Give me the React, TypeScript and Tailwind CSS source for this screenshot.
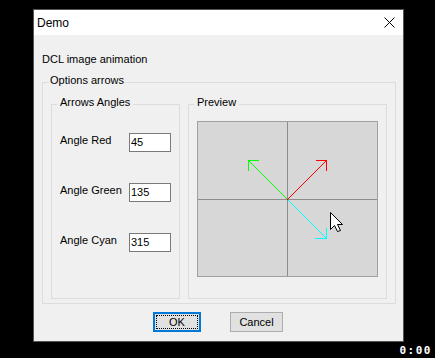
import React from "react";

const font = { fontFamily: '"Liberation Sans", Arial, sans-serif' };

function GroupBox({
  title,
  className,
  legendClass,
  children,
}: {
  title: string;
  className: string;
  legendClass: string;
  children?: React.ReactNode;
}) {
  return (
    <div className={`relative border border-[#dcdcdc] ${className}`}>
      <span
        className={`absolute top-[-9px] bg-[#f0f0f0] text-[11px] leading-[13px] text-black whitespace-nowrap ${legendClass}`}
      >
        {title}
      </span>
      {children}
    </div>
  );
}

function AngleRow({ label, value }: { label: string; value: string }) {
  return (
    <div className="flex items-start h-[19px]">
      <span className="w-[69px] text-[11px] leading-[15px] text-black">{label}</span>
      <input
        readOnly
        value={value}
        className="w-[42px] h-[19px] border border-[#7a7a7a] bg-white pl-[1px] pb-[2px] text-[11px] text-black outline-none"
        style={font}
      />
    </div>
  );
}

// pixel-stepped 45° arrow, drawn like the GDI original
function Arrow({
  color,
  dx,
  dy,
  len,
  headX,
  headY,
}: {
  color: string;
  dx: number;
  dy: number;
  len: number;
  headX: [number, number];
  headY: [number, number];
}) {
  const tx = 90 + dx * len;
  const ty = 78 + dy * len;
  return (
    <g fill={color} shapeRendering="crispEdges">
      {Array.from({ length: len + 1 }, (_, i) => (
        <rect key={i} x={90 + dx * i} y={78 + dy * i} width={1} height={1} />
      ))}
      <rect x={headX[0]} y={ty} width={headX[1] - headX[0] + 1} height={1} />
      <rect x={tx} y={headY[0]} width={1} height={headY[1] - headY[0] + 1} />
    </g>
  );
}

function PreviewCanvas() {
  return (
    <svg width={181} height={156} className="block ml-[8px] mt-[16px]">
      <rect x={0.5} y={0.5} width={180} height={155} fill="#d7d7d7" stroke="#a0a0a0" />
      <line x1={90.5} y1={1} x2={90.5} y2={155} stroke="#8c8c8c" />
      <line x1={1} y1={78.5} x2={180} y2={78.5} stroke="#8c8c8c" />
      <Arrow color="#00ffff" dx={1} dy={1} len={39} headX={[118, 129]} headY={[107, 117]} />
      <Arrow color="#00ff00" dx={-1} dy={-1} len={39} headX={[51, 61]} headY={[39, 49]} />
      <Arrow color="#ff0000" dx={1} dy={-1} len={39} headX={[119, 129]} headY={[39, 49]} />
      <polygon
        points="133.5,91.5 133.5,108.5 137.5,104.5 140.5,110.5 143.5,109.5 140.5,103.5 145.5,103.5"
        fill="#ffffff"
        stroke="#000000"
        strokeWidth={1}
        strokeLinejoin="miter"
      />
    </svg>
  );
}

export default function App() {
  return (
    <div className="w-[435px] h-[358px] bg-black pl-[33px] pt-[9px] overflow-hidden" style={font}>
      <div className="w-[371px] h-[333px] border border-[#555555] flex flex-col">
        {/* title bar */}
        <div className="h-[25px] bg-white flex items-center justify-between pl-[3px] pr-[8px]">
          <span className="text-[12px] text-black">Demo</span>
          <svg width={11} height={11} className="block">
            <line x1={0.5} y1={0.5} x2={10.5} y2={10.5} stroke="#000" />
            <line x1={10.5} y1={0.5} x2={0.5} y2={10.5} stroke="#000" />
          </svg>
        </div>

        {/* body */}
        <div className="flex-1 bg-[#f0f0f0] pt-[18px] pl-[8px]">
          <p className="text-[11px] leading-[13px] text-black">DCL image animation</p>

          <GroupBox
            title="Options arrows"
            className="mt-[16px] w-[354px] h-[222px] flex gap-[8px] pl-[8px] pt-[21px]"
            legendClass="left-[6px] px-[1px]"
          >
            <GroupBox
              title="Arrows Angles"
              className="w-[129px] h-[195px] flex flex-col gap-[31px] pl-[8px] pt-[28px]"
              legendClass="left-[5px] px-[3px]"
            >
              <AngleRow label="Angle Red" value="45" />
              <AngleRow label="Angle Green" value="135" />
              <AngleRow label="Angle Cyan" value="315" />
            </GroupBox>

            <GroupBox
              title="Preview"
              className="w-[199px] h-[195px]"
              legendClass="left-[5px] px-[3px]"
            >
              <PreviewCanvas />
            </GroupBox>
          </GroupBox>

          <div className="mt-[8px] w-[354px] flex justify-center gap-[29px] pr-[2px]">
            <button
              type="button"
              className="w-[48px] h-[20px] border-2 border-[#0078d7] bg-[#e1e1e1] p-[1px] text-[11px] text-black"
            >
              <span className="flex h-full w-full items-center justify-center border border-dotted border-black">
                OK
              </span>
            </button>
            <button
              type="button"
              className="w-[53px] h-[20px] border border-[#adadad] bg-[#e1e1e1] text-[11px] text-black"
            >
              Cancel
            </button>
          </div>
        </div>
      </div>

      <div className="flex justify-end pr-[3px] mt-[3px]">
        <span
          className="text-[11px] leading-[11px] font-bold text-white tracking-[1.5px]"
          style={{ fontFamily: '"DejaVu Sans Mono", monospace' }}
        >
          0:00
        </span>
      </div>
    </div>
  );
}
